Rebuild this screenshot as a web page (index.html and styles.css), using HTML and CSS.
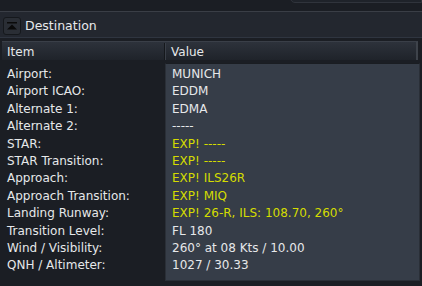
FILE: index.html
```html
<!DOCTYPE html>
<html lang="en">
<head>
<meta charset="UTF-8">
<title>Destination</title>
<link rel="stylesheet" href="styles.css">
</head>
<body>

<div class="top-strip">
  <div class="top-tab"></div>
</div>

<!-- Section header -->
<div class="section-bar">
  <button class="collapse-btn" type="button">
    <svg width="12" height="10" viewBox="0 0 12 10">
      <rect x="1" y="1" width="10" height="1.5" fill="#0a0a0a"/>
      <polygon points="6,3.5 11,8.5 1,8.5" fill="#0a0a0a"/>
    </svg>
  </button>
  <span class="section-title">Destination</span>
</div>

<div class="grid">
  <div class="grid-head">
    <div class="col-item">Item</div>
    <div class="col-value">Value</div>
  </div>
  <div class="grid-body">
    <div class="items">
      <div>Airport:</div>
      <div>Airport ICAO:</div>
      <div>Alternate 1:</div>
      <div>Alternate 2:</div>
      <div>STAR:</div>
      <div>STAR Transition:</div>
      <div>Approach:</div>
      <div>Approach Transition:</div>
      <div>Landing Runway:</div>
      <div>Transition Level:</div>
      <div>Wind / Visibility:</div>
      <div>QNH / Altimeter:</div>
    </div>
    <div class="values">
      <div>MUNICH</div>
      <div>EDDM</div>
      <div>EDMA</div>
      <div>-----</div>
      <div class="exp">EXP! -----</div>
      <div class="exp">EXP! -----</div>
      <div class="exp">EXP! ILS26R</div>
      <div class="exp">EXP! MIQ</div>
      <div class="exp">EXP! 26-R, ILS: 108.70, 260°</div>
      <div>FL 180</div>
      <div>260° at 08 Kts / 10.00</div>
      <div>1027 / 30.33</div>
    </div>
  </div>
</div>

</body>
</html>
```

FILE: styles.css
```css
body {
  margin: 0;
  background: #1b1e24;
  font-family: "DejaVu Sans", Tahoma, sans-serif;
  font-size: 12px;
  color: #e6e8ea;
  width: 422px;
  height: 286px;
  overflow: hidden;
}

.top-strip {
  height: 11px;
  position: relative;
  border-bottom: 1px solid #3a3e46;
}

.top-tab {
  position: absolute;
  right: 0;
  top: -4px;
  width: 130px;
  height: 5px;
  background: #1f232a;
  border: 1px solid #30343c;
  border-radius: 0 0 0 5px;
}

.section-bar {
  height: 23px;
  padding: 2px 0 0 3px;
  background: #23272f;
  display: flex;
  align-items: center;
  border-bottom: 1px solid #2f3540;
}

.collapse-btn {
  width: 18px;
  height: 18px;
  padding: 0;
  margin: 0 4px 0 0;
  border: 1px solid #15181c;
  border-radius: 3px;
  background: #2a2e35;
  display: flex;
  justify-content: center;
  align-items: center;
}

.collapse-btn svg {
  display: block;
  background: #2a2e35;
}

.section-title {
  font-size: 12.5px;
  color: #e8eaec;
}

.grid {
  margin: 3px 4px 0 2px;
}

.grid-head {
  display: flex;
  height: 19px;
  padding-top: 1px;
  box-sizing: border-box;
  background: linear-gradient(#2d323b, #1f232a);
  border-top: 1px solid #3a3f48;
  border-right: 2px solid #3e434b;
  align-items: center;
}

.col-item {
  width: 157px;
  padding-left: 5px;
  height: 100%;
  display: flex;
  align-items: center;
  border-right: 1px solid #15181c;
  box-shadow: 1px 0 0 #3a3f48;
}

.col-value {
  padding-left: 6px;
}

.grid-body {
  display: flex;
  margin-top: 3px;
}

.items {
  width: 157px;
  padding: 3px 0 0 5px;
}

.values {
  flex: 1;
  background: #363d48;
  border: 1px solid #2a2f37;
  border-top-color: #1a1d22;
  padding: 2px 0 5px 6px;
  margin-left: 1px;
  margin-right: -2px;
}

.items div, .values div {
  height: 17.4px;
  line-height: 17.4px;
  white-space: nowrap;
}

.exp {
  color: #d4dc00;
}
```
